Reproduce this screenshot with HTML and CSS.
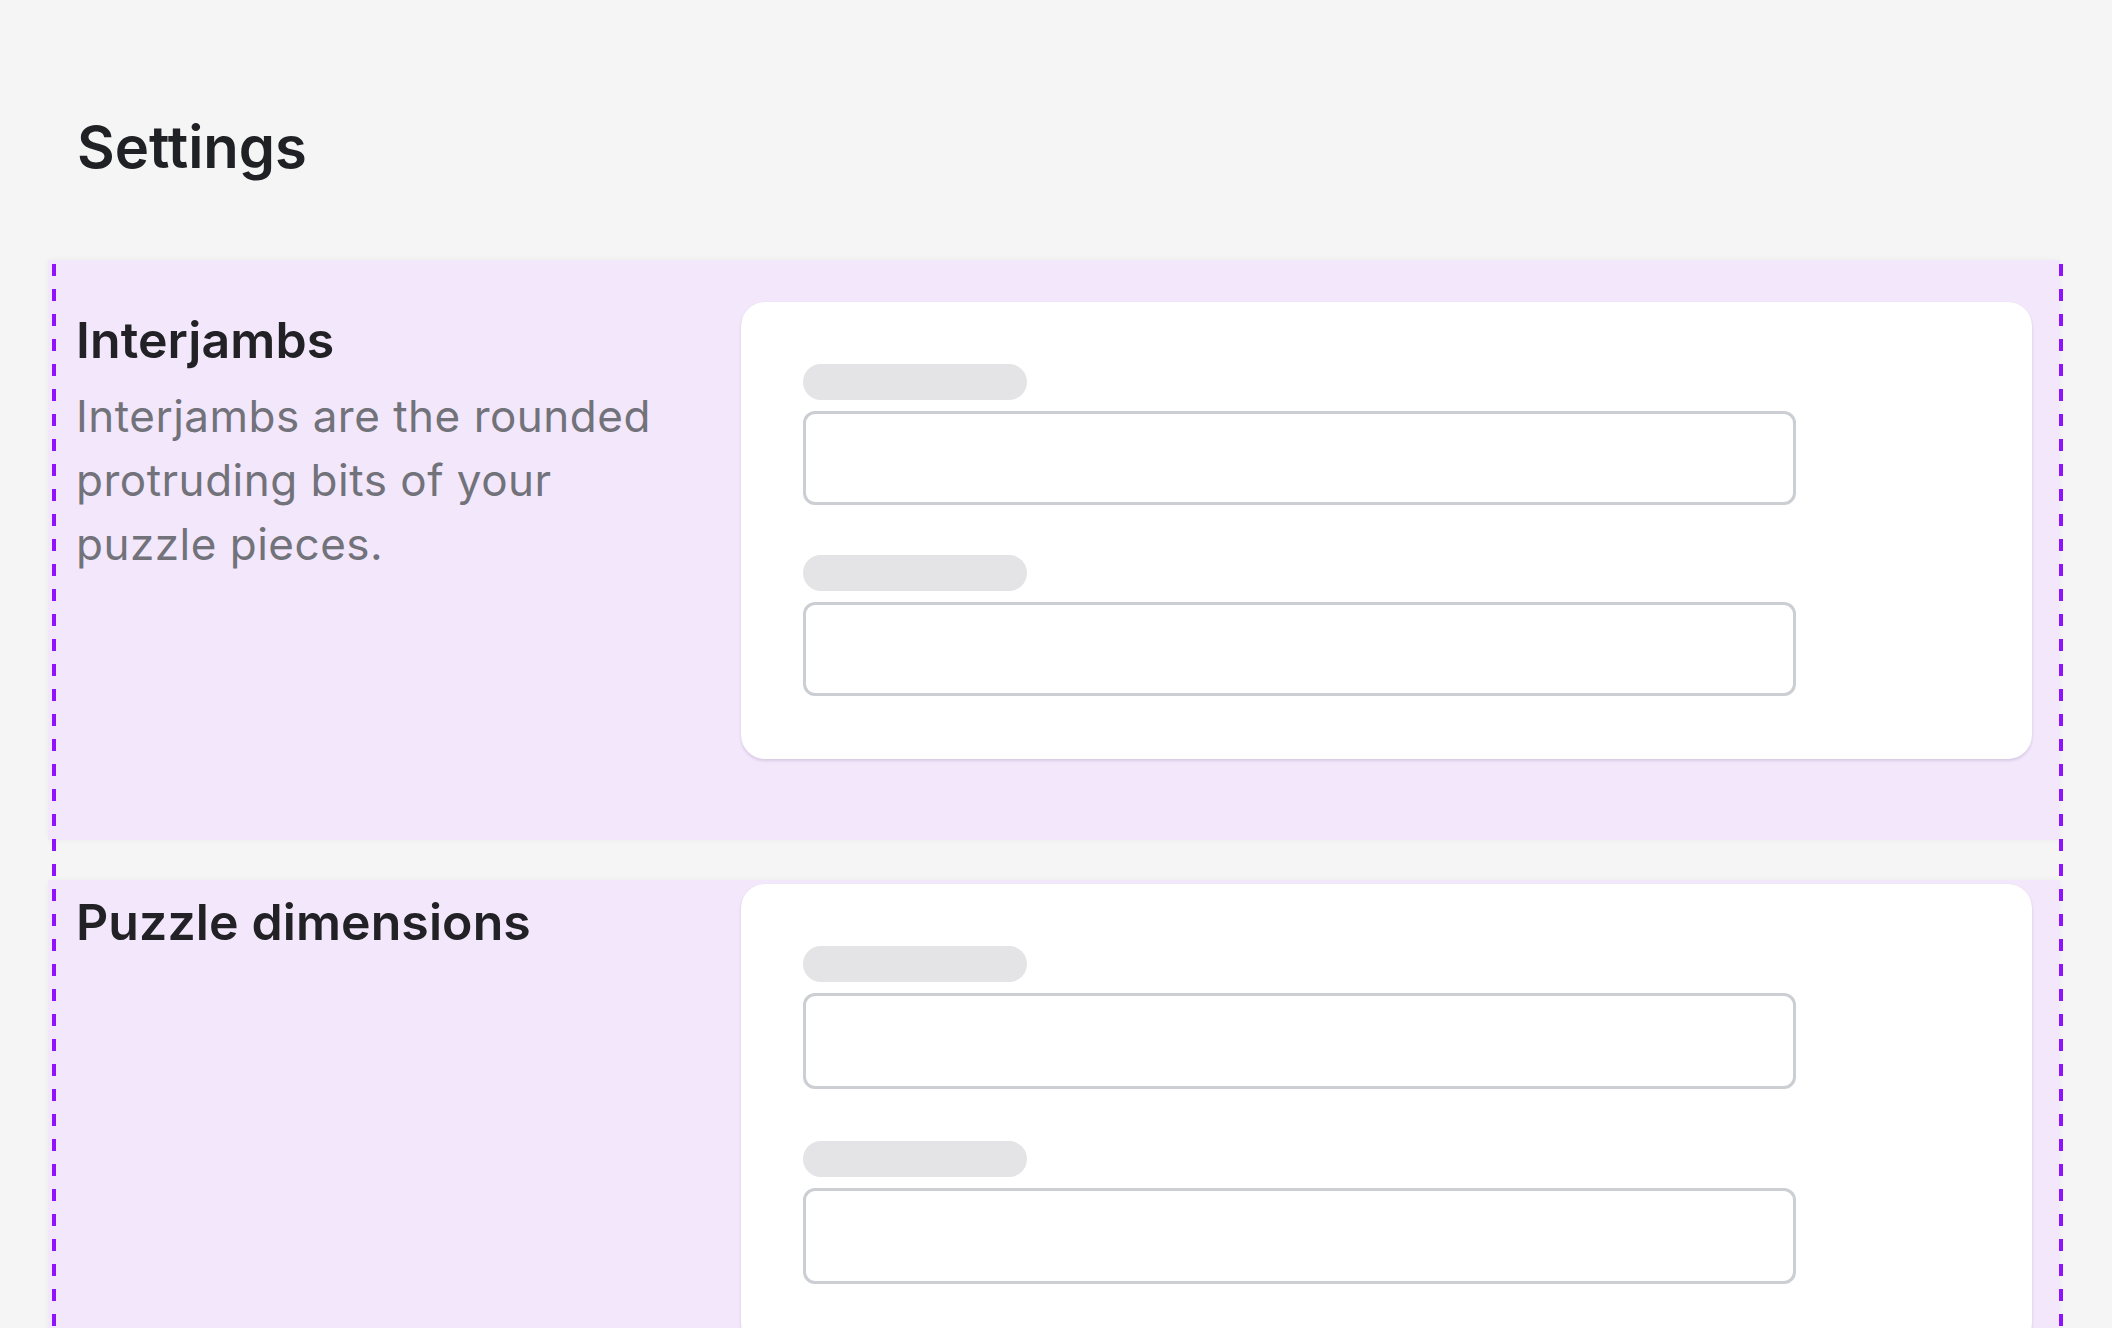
FILE: index.html
```html
<!DOCTYPE html>
<html lang="en">
<head>
<meta charset="utf-8">
<title>Settings</title>
<link rel="stylesheet" href="styles.css">
</head>
<body>
  <header class="page-header">
    <h1 class="page-title">Settings</h1>
  </header>
  <main class="settings">
    <div class="guide guide-left" aria-hidden="true"></div>
    <div class="guide guide-right" aria-hidden="true"></div>
    <section class="group group-first">
      <div class="group-info">
        <h2 class="group-title">Interjambs</h2>
        <p class="group-desc">Interjambs are the rounded protruding bits of your puzzle pieces.</p>
      </div>
      <div class="card">
        <div class="field">
          <span class="label-skeleton"></span>
          <div class="input"></div>
        </div>
        <div class="field">
          <span class="label-skeleton"></span>
          <div class="input"></div>
        </div>
      </div>
    </section>
    <section class="group group-second">
      <div class="group-info">
        <h2 class="group-title">Puzzle dimensions</h2>
      </div>
      <div class="card">
        <div class="field">
          <span class="label-skeleton"></span>
          <div class="input"></div>
        </div>
        <div class="field">
          <span class="label-skeleton"></span>
          <div class="input"></div>
        </div>
      </div>
    </section>
  </main>
</body>
</html>
```

FILE: styles.css
```css
html {
  overflow: hidden;
}

body {
  margin: 0;
  background: #f5f5f5;
  font-family: Inter, "Noto Sans", sans-serif;
  color: #1f2023;
}

.page-header {
  padding: 113px 0 0 77px;
  margin-bottom: 79px;
}

.page-title {
  margin: 0;
  font-size: 58px;
  line-height: 68px;
  font-weight: 600;
  color: #202124;
  letter-spacing: 0;
}

.settings {
  position: relative;
  margin: 0 52px 0 48px;
  display: flex;
  flex-direction: column;
  gap: 40px;
}

.guide {
  position: absolute;
  top: 4px;
  bottom: -400px;
  width: 4px;
  background: repeating-linear-gradient(to bottom, #9013fe 0 12px, transparent 12px 25px);
  pointer-events: none;
  z-index: 2;
}

.guide-left {
  left: 4px;
}

.guide-right {
  right: -3px;
}

.group {
  background: #f3e7fb;
  display: grid;
  grid-template-columns: 600px 1fr;
  column-gap: 65px;
  padding: 42px 28px 81px 28px;
  box-shadow: 0 0 6px rgba(0, 0, 0, 0.04);
}

.group-second {
  padding-top: 4px;
  padding-bottom: 200px;
}

.group-info {
  min-width: 0;
}

.group-title {
  margin: 0;
  font-size: 50px;
  line-height: 76px;
  font-weight: 600;
  color: #222226;
  letter-spacing: 0.1px;
}

.group-desc {
  margin: 6px 0 0;
  font-size: 44px;
  line-height: 64px;
  font-weight: 400;
  color: #72727a;
  letter-spacing: 0.5px;
}

.card {
  background: #ffffff;
  border-radius: 24px;
  padding: 62px 62px 63px;
  display: flex;
  flex-direction: column;
  gap: 50px;
  box-shadow: 0 2px 3px rgba(60, 30, 90, 0.14), 0 0 1px rgba(60, 30, 90, 0.08);
}

.group-second .card {
  gap: 52px;
}

.field {
  display: flex;
  flex-direction: column;
  align-items: flex-start;
  gap: 11px;
}

.label-skeleton {
  display: block;
  width: 224px;
  height: 36px;
  border-radius: 18px;
  background: #e4e4e7;
}

.input {
  box-sizing: border-box;
  width: 993px;
  height: 94px;
  border: 3px solid #cbced2;
  border-radius: 12px;
  background: #fff;
}

.group-second .input {
  height: 96px;
}
```
